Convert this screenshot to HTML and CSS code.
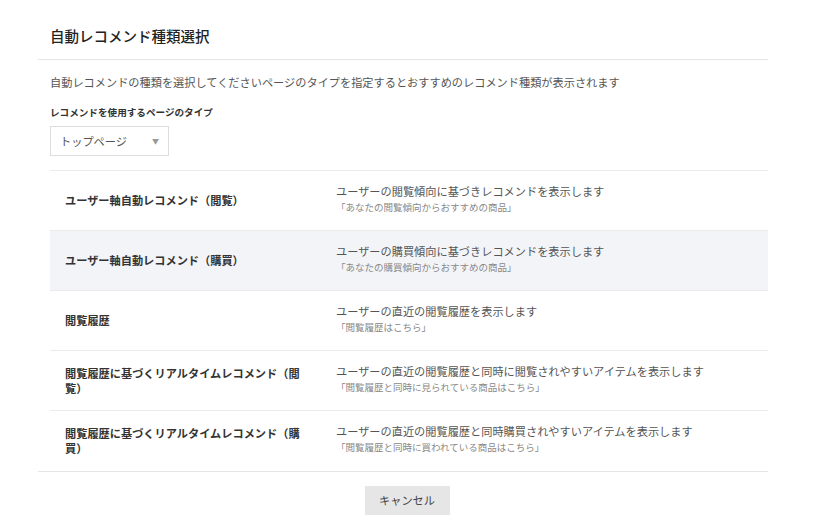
FILE: index.html
```html
<!DOCTYPE html>
<html>
<head>
  <meta charset="utf-8">
  <link rel="stylesheet" href="styles.css">
</head>
<body>

  <div class="modal">
    <div class="modal-header">
      <h2>自動レコメンド種類選択</h2>
    </div>

    <div class="modal-body">
      <p class="lead">自動レコメンドの種類を選択してくださいページのタイプを指定するとおすすめのレコメンド種類が表示されます</p>

      <div class="form-group">
        <label for="pageType">レコメンドを使用するページのタイプ</label>
        <div class="select">
          <span>トップページ</span>
          <span class="caret">▼</span>
        </div>
      </div>

      <table class="types">
        <tr>
          <th>ユーザー軸自動レコメンド（閲覧）</th>
          <td>
            <div class="desc">ユーザーの閲覧傾向に基づきレコメンドを表示します</div>
            <div class="example">「あなたの閲覧傾向からおすすめの商品」</div>
          </td>
        </tr>
        <tr class="active">
          <th>ユーザー軸自動レコメンド（購買）</th>
          <td>
            <div class="desc">ユーザーの購買傾向に基づきレコメンドを表示します</div>
            <div class="example">「あなたの購買傾向からおすすめの商品」</div>
          </td>
        </tr>
        <tr>
          <th>閲覧履歴</th>
          <td>
            <div class="desc">ユーザーの直近の閲覧履歴を表示します</div>
            <div class="example">「閲覧履歴はこちら」</div>
          </td>
        </tr>
        <tr>
          <th>閲覧履歴に基づくリアルタイムレコメンド（閲覧）</th>
          <td>
            <div class="desc">ユーザーの直近の閲覧履歴と同時に閲覧されやすいアイテムを表示します</div>
            <div class="example">「閲覧履歴と同時に見られている商品はこちら」</div>
          </td>
        </tr>
        <tr>
          <th>閲覧履歴に基づくリアルタイムレコメンド（購買）</th>
          <td>
            <div class="desc">ユーザーの直近の閲覧履歴と同時購買されやすいアイテムを表示します</div>
            <div class="example">「閲覧履歴と同時に買われている商品はこちら」</div>
          </td>
        </tr>
      </table>
    </div>

    <div class="modal-footer">
      <button class="btn">キャンセル</button>
    </div>
  </div>

</body>
</html>
```

FILE: styles.css
```css
body {
  margin: 0;
  background: #fff;
  font-family: "Noto Sans CJK JP", "Noto Sans", sans-serif;
  color: #333;
}

.modal {
  width: 730px;
  margin-left: 38px;
}

.modal-header {
  height: 47px;
  padding: 12px 0 0 12px;
  border-bottom: 1px solid #e6e6e6;
  display: flex;
  align-items: center;
}

.modal-header h2 {
  margin: 0;
  font-size: 14.5px;
  font-weight: 500;
  color: #222;
}

.modal-body {
  padding: 13px 0 0 12px;
}

.lead {
  margin: 0 0 14px;
  font-size: 11.2px;
  line-height: 18px;
  color: #555;
}

.form-group label {
  display: block;
  margin-bottom: 7px;
  font-size: 9.6px;
  font-weight: bold;
  line-height: 14px;
  color: #333;
}

.select {
  width: 108px;
  height: 28px;
  padding-left: 9px;
  border: 1px solid #ddd;
  display: flex;
  align-items: center;
  justify-content: space-between;
  font-size: 11.2px;
  color: #555;
}

.select .caret {
  font-size: 7px;
  color: #999;
  margin-right: 9px;
}

.types {
  width: 100%;
  margin-top: 14px;
  border-collapse: collapse;
  border-top: 1px solid #ebebeb;
}

.types tr {
  height: 60px;
  border-bottom: 1px solid #ebebeb;
}

.types tr:last-child {
  border-bottom: none;
}

.types tr.active {
  background: #f3f4f8;
}

.types th {
  width: 240px;
  padding: 0 31px 0 15px;
  text-align: left;
  font-size: 11.2px;
  font-weight: bold;
  line-height: 15px;
  color: #333;
}

.types td {
  padding: 0 0 6px;
  vertical-align: middle;
}

.desc {
  font-size: 11.2px;
  line-height: 18px;
  color: #555;
}

.example {
  font-size: 9.5px;
  line-height: 14px;
  color: #888;
}

.modal-footer {
  border-top: 1px solid #e6e6e6;
  padding-top: 14px;
  display: flex;
  justify-content: center;
}

.btn {
  width: 85px;
  height: 29px;
  margin-left: 8px;
  border: none;
  background: #e6e6e6;
  font-family: inherit;
  font-size: 11.2px;
  color: #444;
}
```
